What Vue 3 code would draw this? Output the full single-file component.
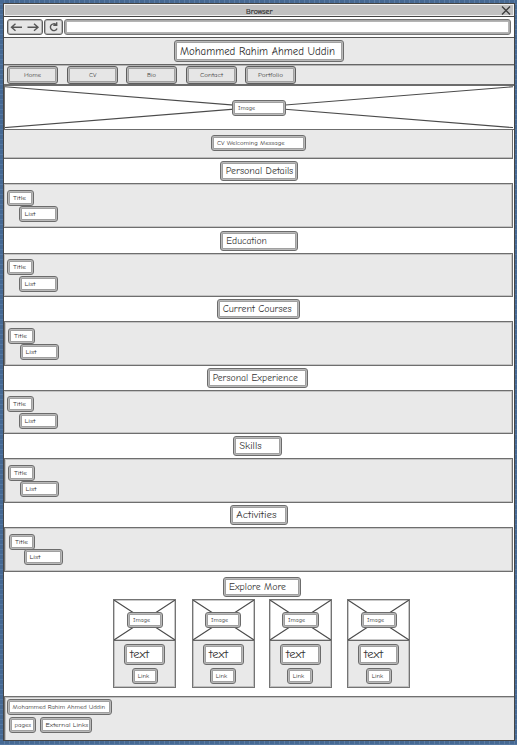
<script setup>
import { h } from 'vue'

// Outlined box with one line of text. x: left offset, w: outer width,
// pad: distance from box edge to text, len: text length.
const Tag = (p) => {
  const kind = p.kind || 'small'
  const metrics = { small: [16, 10], heading: [20, 13.3], title: [22, 15], text: [21, 14.3], nav: [16, 11] }
  const [height, base] = metrics[kind]
  return h('div', { class: ['tag', kind], style: { width: p.w + 'px', marginLeft: (p.x || 0) + 'px' } }, [
    h('svg', { width: p.w - 4, height: height - 4 }, [
      h('text', { x: p.pad - 1, y: base - 1, textLength: p.len, lengthAdjust: 'spacingAndGlyphs' }, p.label)
    ])
  ])
}
Tag.props = ['kind', 'w', 'x', 'pad', 'len', 'label']

const nav = [
  { label: 'Home', x: 3, w: 51, pad: 17, len: 17 },
  { label: 'CV', x: 9, w: 51, pad: 22, len: 7.5 },
  { label: 'Bio', x: 8, w: 51, pad: 21, len: 9 },
  { label: 'Contact', x: 9, w: 51, pad: 14, len: 23 },
  { label: 'Portfolio', x: 8, w: 51, pad: 13, len: 25 }
]

const sections = [
  { head: { label: 'Personal Details', x: 216, w: 78, pad: 5.7, len: 67.6 }, space: 24, top: 2, height: 45, pt: 5, left: 3, lx: 15, gap: 0, inset: 0, tw: 27 },
  { head: { label: 'Education', x: 216, w: 78, pad: 6.3, len: 40.5 }, space: 25, top: 3, height: 44, pt: 4, left: 3, lx: 15, gap: 1, inset: 0, tw: 27 },
  { head: { label: 'Current Courses', x: 213, w: 83, pad: 5.7, len: 69 }, space: 24, top: 2, height: 45, pt: 5, left: 4, lx: 16, gap: 0, inset: 1, tw: 27 },
  { head: { label: 'Personal Experience', x: 203, w: 101, pad: 5.7, len: 85.3 }, space: 24, top: 2, height: 44, pt: 4, left: 3, lx: 15, gap: 1, inset: 0, tw: 27 },
  { head: { label: 'Skills', x: 229, w: 49, pad: 6.3, len: 22.3 }, space: 24, top: 2, height: 45, pt: 5, left: 4, lx: 16, gap: 0, inset: 1, tw: 27 },
  { head: { label: 'Activities', x: 226, w: 58, pad: 6.3, len: 40.3 }, space: 24, top: 2, height: 45, pt: 5, left: 5, lx: 20, gap: -1, inset: 1, tw: 26 }
]

const cards = [
  { gap: 0, image: 12, iw: 36, link: 17 },
  { gap: 16, image: 11, iw: 36, link: 16 },
  { gap: 14, image: 11, iw: 37, link: 16 },
  { gap: 15, image: 12, iw: 36, link: 17 }
]
</script>

<template>
  <div class="desktop">
    <main class="window">
      <header class="titlebar">
        <svg class="caption" width="28" height="9"><text x="0" y="8" textLength="26.5" lengthAdjust="spacingAndGlyphs">Browser</text></svg>
        <svg class="close" width="10" height="9"><path d="M1 .5 9 8.5M9 .5 1 8.5" /></svg>
      </header>

      <div class="toolbar">
        <div class="button arrows">
          <svg width="32" height="12">
            <path d="M2.5 6.3H13M6.5 2.8 2.5 6.3l4 3.5M18.5 6.3H29M25 2.8l4 3.5-4 3.5" />
          </svg>
        </div>
        <div class="button reload">
          <svg width="15" height="12"><path d="M10.2 3.8A3.4 3.4 0 1 0 11 7.4M10.7 1.2v3.2H7.3" /></svg>
        </div>
        <div class="address"></div>
      </div>

      <div class="masthead"><Tag kind="title" label="Mohammed Rahim Ahmed Uddin" :x="170" :w="170" :pad="6" :len="155" /></div>

      <nav class="nav"><Tag v-for="n in nav" :key="n.label" kind="nav" v-bind="n" /></nav>

      <div class="banner">
        <svg class="cross" width="508" height="42"><path d="M0 .7 508 41.6M0 41.6 508 .7" /></svg>
        <Tag label="Image" :x="227" :w="54" :pad="6" :len="17" />
      </div>

      <div class="welcome"><Tag label="CV Welcoming Message" :x="207" :w="95" :pad="6" :len="67.5" /></div>

      <section v-for="s in sections" :key="s.head.label">
        <div class="head" :style="{ height: s.space + 'px', paddingTop: s.top + 'px' }">
          <Tag kind="heading" v-bind="s.head" />
        </div>
        <div class="band" :class="{ inset: s.inset }" :style="{ height: s.height + 'px', paddingTop: s.pt + 1 + 'px' }">
          <Tag label="Title" :x="s.left - s.inset" :w="s.tw" :pad="6" :len="13" />
          <div :style="{ marginTop: s.gap + 'px' }">
            <Tag label="List" :x="s.lx - s.inset" :w="39" :pad="5.5" :len="11" />
          </div>
        </div>
      </section>

      <section class="explore">
        <Tag kind="heading" label="Explore More" :x="219" :w="78" :pad="6" :len="57" />
        <div class="cards">
          <article v-for="(c, i) in cards" :key="i" class="card" :style="{ marginLeft: c.gap + 'px' }">
            <div class="picture">
              <svg class="cross" width="61" height="40"><path d="M0 0 61 40M0 40 61 0" /></svg>
              <Tag label="Image" :x="c.image + 1" :w="c.iw" :pad="6" :len="17" />
            </div>
            <div class="details">
              <Tag kind="text" label="text" :x="10" :w="41" :pad="6" :len="19" />
              <Tag label="Link" :x="c.link + 1" :w="26" :pad="5.7" :len="11.5" />
            </div>
          </article>
        </div>
      </section>

      <footer class="footer">
        <Tag label="Mohammed Rahim Ahmed Uddin" :x="2" :w="105" :pad="5.6" :len="92.5" />
        <div class="links">
          <Tag label="pages" :x="4" :w="27" :pad="5.5" :len="16.5" />
          <Tag label="External Links" :x="4" :w="52" :pad="5.5" :len="42.8" />
        </div>
      </footer>
    </main>
  </div>
</template>

<style>
body { margin: 0; }
</style>

<style scoped>
.desktop, .desktop * { box-sizing: border-box; }
.desktop {
  width: 517px;
  height: 745px;
  padding: 3px 2px 4px 3px;
  overflow: hidden;
  font-family: "Comic Sans MS", "Comic Neue", Lato, sans-serif;
  background:
    repeating-linear-gradient(90deg, transparent 0 4px, #5b7ba3 4px 5px),
    repeating-linear-gradient(#466993 0 4px, #5578a2 4px 5px);
}
.window {
  width: 512px;
  height: 738px;
  display: flex;
  flex-direction: column;
  background: #fff;
  border: 1px solid #454545;
}
svg { display: block; }
path { fill: none; stroke: #4b4b4b; }

.titlebar {
  height: 13px;
  flex: none;
  display: flex;
  align-items: center;
  background: #c1c1c1;
  border: solid #f2f2f2;
  border-width: 1px 1px 2px;
  padding: 0 2px 0 241px;
}
.caption { font-size: 7.3px; fill: #333; stroke: #333; stroke-width: .2px; overflow: visible; }
.close { margin-left: auto; }
.close path { stroke: #3e3e3e; stroke-width: 1.4; }

.toolbar {
  flex: none;
  display: flex;
  height: 22px;
  margin-top: -1px;
  padding: 2px 3px 0;
  border-top: 1px solid #444;
  border-bottom: 1px solid #555;
  box-shadow: 0 1px #aaa;
  background: #fff;
  position: relative;
}
.button {
  height: 16px;
  border: 1px solid #5e5e5e;
  border-radius: 3px;
  background: #e6e6e6;
  box-shadow: inset 0 0 0 1px #b4b4b4;
  padding: 1px;
}
.button path { stroke-width: 1.4; stroke: #555; }
.arrows { width: 36px; }
.reload { width: 19px; margin-left: 1px; }
.address {
  flex: 1;
  height: 16px;
  margin-left: 1px;
  border: 1px solid #747474;
  border-radius: 3px;
  background: #fff;
  box-shadow: inset 0 0 0 1px #aaa, inset 0 0 0 2px #b4b4b4;
}

:deep(.tag) {
  box-sizing: border-box;
  flex: none;
  height: 16px;
  background: #fff;
  border: 1px solid #6c6c6c;
  border-radius: 3px;
  box-shadow: inset 0 0 0 1px #bababa, inset 0 0 0 2px #a0a0a0;
}
:deep(.tag svg) { display: block; overflow: visible; }
:deep(.tag text) { font-size: 6.6px; fill: #333; }
:deep(.tag.heading) { height: 20px; }
:deep(.tag.heading text) { font-size: 10px; fill: #333; }
:deep(.tag.title) { height: 22px; }
:deep(.tag.title text) { font-size: 11.3px; fill: #2d2d2d; }
:deep(.tag.text) { height: 21px; }
:deep(.tag.text text) { font-size: 11px; fill: #333; }
:deep(.tag.nav) { background: #e6e6e6; border-color: #5e5e5e; }
:deep(.tag.nav text) { font-size: 6.5px; fill: #444; }

.masthead {
  height: 28px;
  flex: none;
  padding-top: 2px;
  background: #e9e9e9;
  border-bottom: 1px solid #666;
  margin-bottom: -1px;
  box-shadow: 0 1px #b4b4b4;
  position: relative;
  height: 27px;
  margin-bottom: 1px;
}
.nav {
  height: 18px;
  flex: none;
  display: flex;
  background: #e9e9e9;
}
.banner {
  height: 46px;
  flex: none;
  display: flex;
  align-items: center;
  position: relative;
  border: solid #6c6c6c;
  border-width: 2px 0 1px 1px;
}
.cross { position: absolute; left: 0; top: 0; }
.cross path { stroke-width: 1.1; }
.banner :deep(.tag), .picture :deep(.tag) { position: relative; }

.welcome {
  height: 29px;
  flex: none;
  padding-top: 5px;
  background: #e9e9e9;
  border: solid #6e6e6e;
  border-width: 0 1px 1px 0;
  margin-right: 1px;
  box-shadow: inset 0 -1px #bcbcbc;
}
section { flex: none; }
.band {
  background: #e9e9e9;
  border: 1px solid #6e6e6e;
  border-left-width: 0;
  margin-right: 1px;
  box-shadow: inset 0 0 0 1px #c4c4c4;
}
.band.inset { border-left-width: 1px; }

.explore { height: 124px; padding-top: 5px; }
.cards { display: flex; margin: 2px 0 0 109px; }
.card {
  width: 63px;
  height: 89px;
  border: 1px solid #747474;
  background: #e9e9e9;
  box-shadow: inset 0 0 0 1px #c0c0c0;
}
.picture {
  position: relative;
  height: 41px;
  padding-top: 12px;
  background: #fff;
  box-shadow: inset 0 0 0 1px #c9c9c9;
  border-bottom: 1px solid #666;
}
.details { padding-top: 3px; display: grid; gap: 3px; }

.footer {
  flex: 1;
  padding-top: 2px;
  background: #e9e9e9;
  border: solid #707070;
  border-width: 1px 0 0 1px;
  box-shadow: inset 1px 1px #c0c0c0;
}
.links { display: flex; margin-top: 2px; }
</style>
